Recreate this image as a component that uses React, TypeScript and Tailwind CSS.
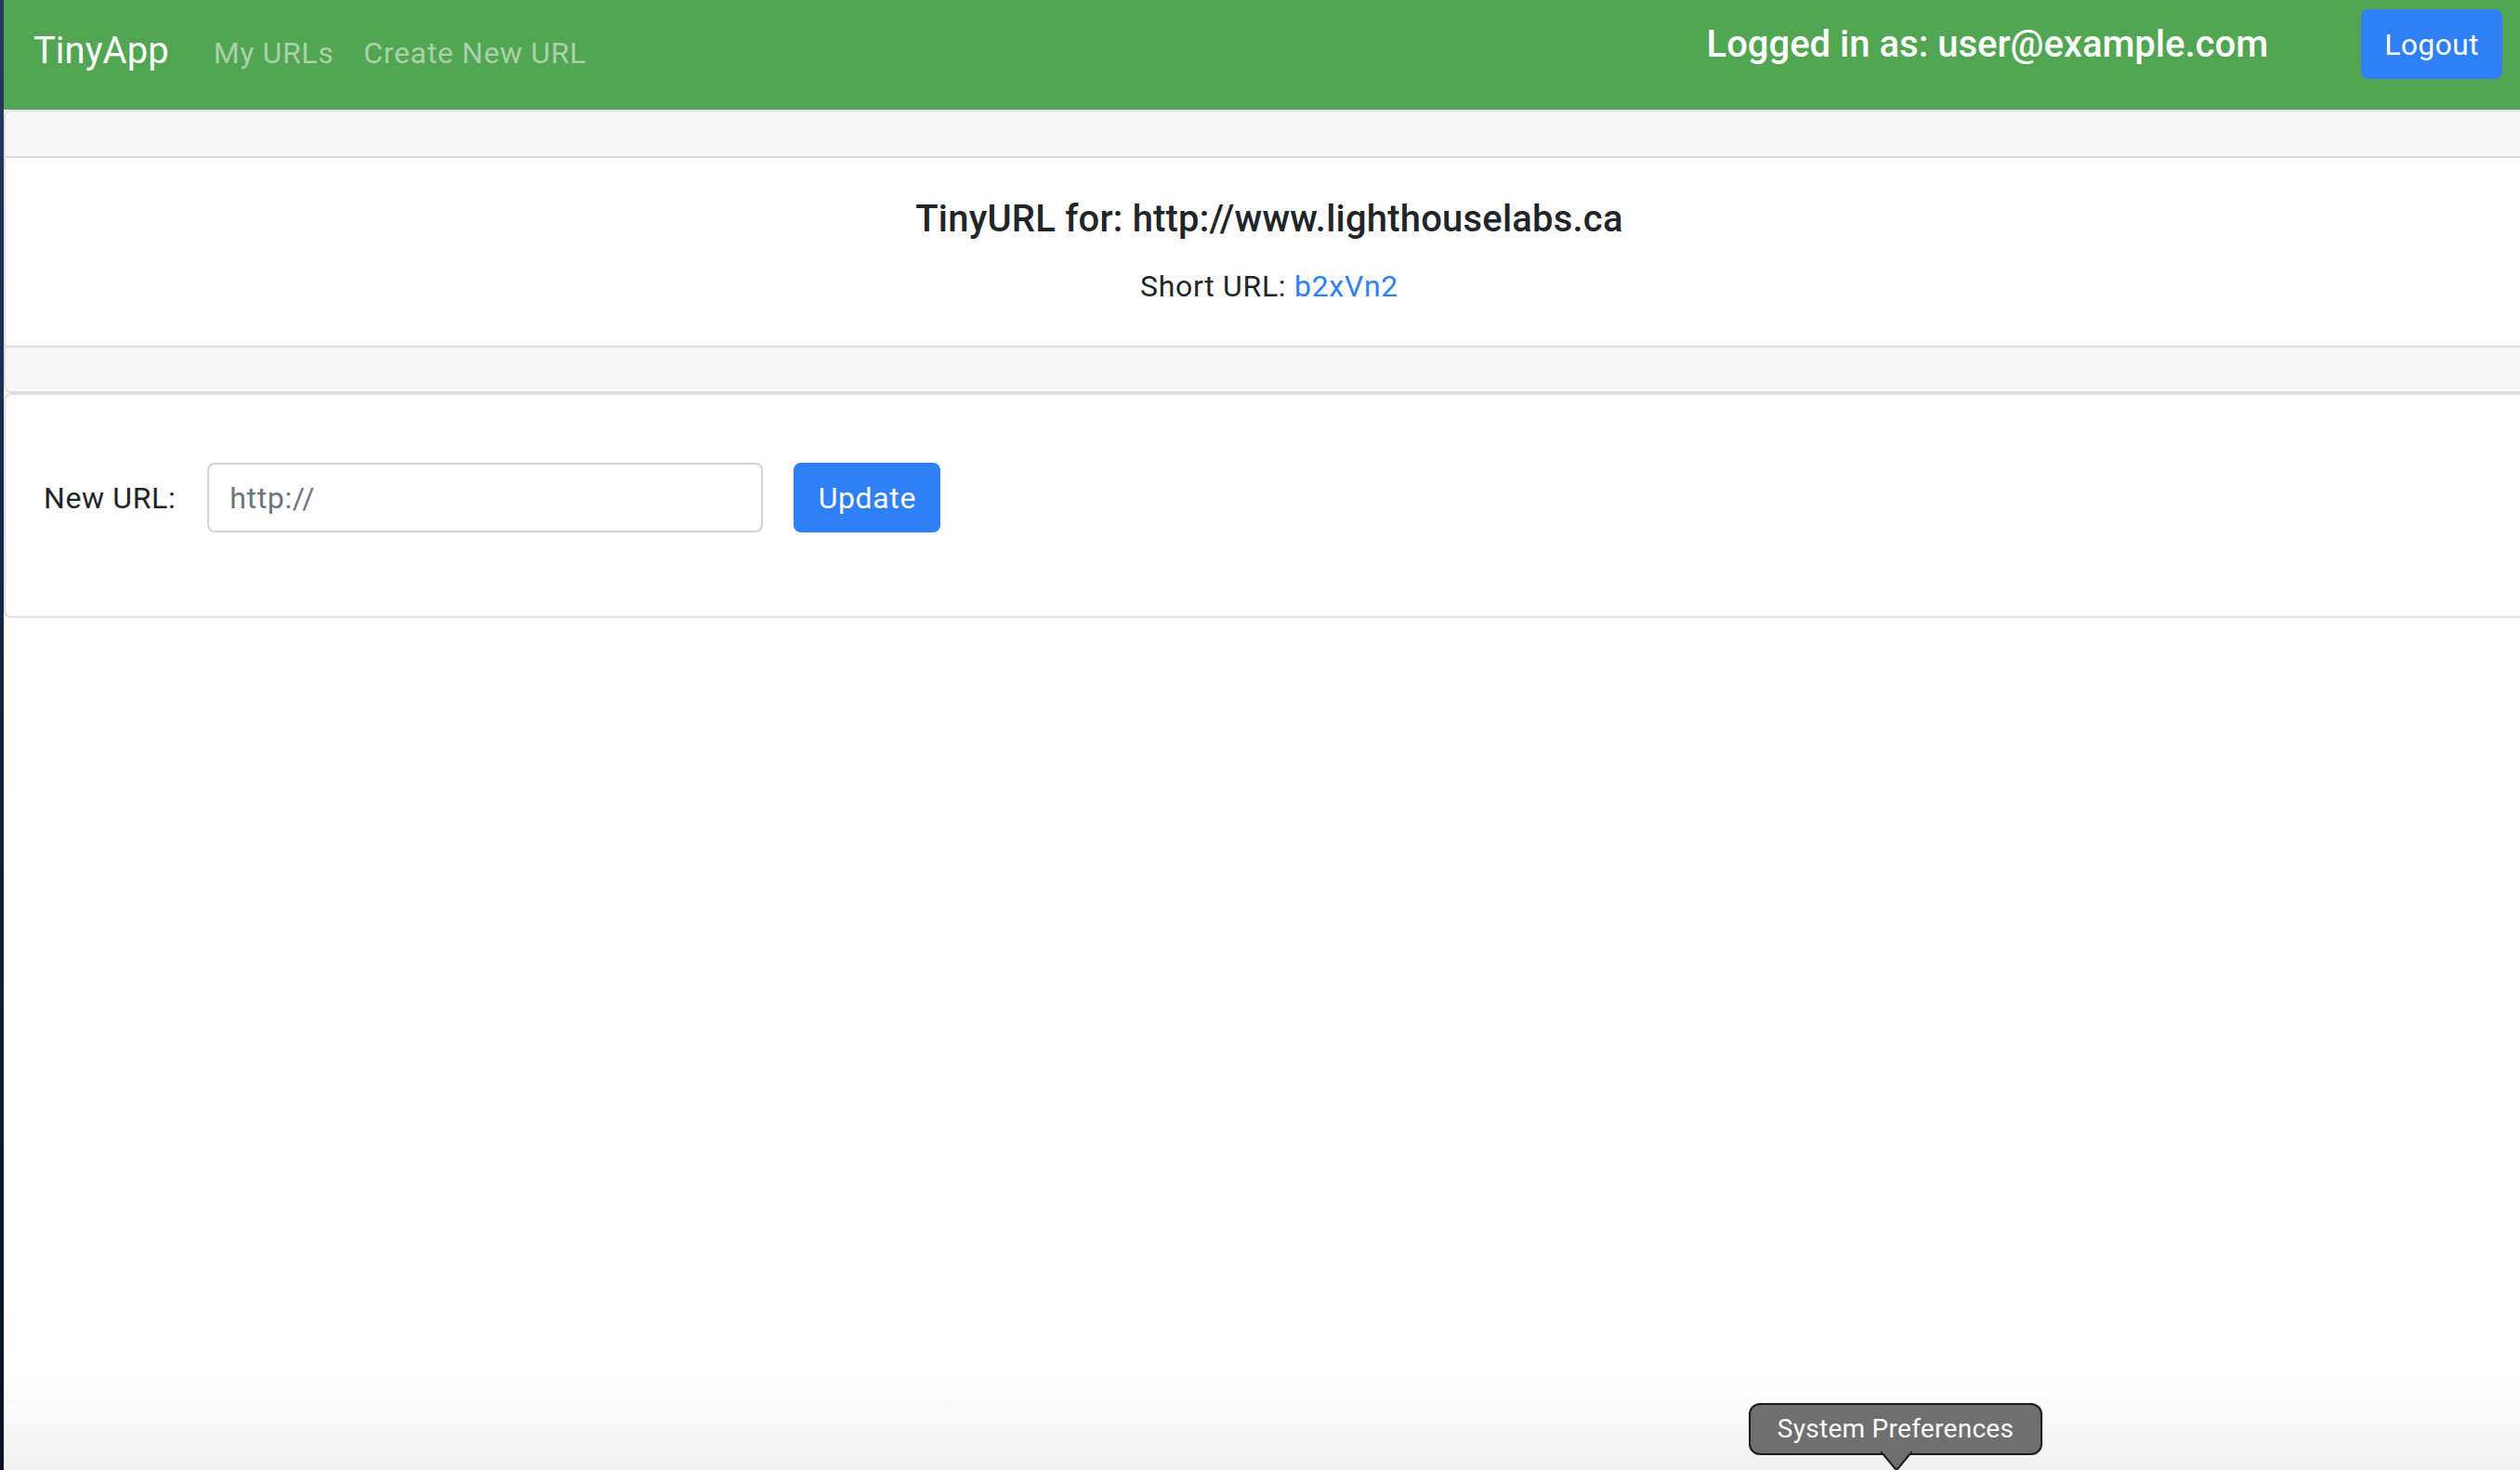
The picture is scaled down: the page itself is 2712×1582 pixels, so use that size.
import React from "react";

const font = { fontFamily: "Roboto, 'Liberation Sans', Arial, sans-serif" };

export default function App() {
  return (
    <div className="relative flex h-[1582px] w-[2712px] overflow-hidden bg-white text-[#212529]" style={font}>
      <div className="w-[4px] shrink-0 bg-gradient-to-b from-[#2a3a5c] via-[#142040] to-[#0b1224]" />
      <div className="flex min-w-0 flex-1 flex-col">
        <nav className="flex h-[118px] shrink-0 items-start bg-[#52a553] pl-[32px] pr-[19px]">
          <a className="mt-[25px] text-[40px] leading-[60px] text-white">TinyApp</a>
          <div className="ml-[32px] mt-[33px] flex">
            <a className="px-[16px] text-[32px] leading-[48px] tracking-[0.02em] text-[#a9d2a9]">My URLs</a>
            <a className="px-[16px] text-[32px] leading-[48px] tracking-[0.02em] text-[#a9d2a9]">Create New URL</a>
          </div>
          <div className="ml-auto mt-[24px] text-[40px] font-medium leading-[48px] text-white">
            Logged in as: user@example.com
          </div>
          <button className="ml-[100px] mt-[10px] h-[75px] w-[152px] rounded-[8px] bg-[#2f7ff6] text-[32px] tracking-[0.01em] text-white">
            Logout
          </button>
        </nav>

        <div className="rounded-tl-[8px] rounded-bl-[8px] border-y-2 border-l-2 border-[#dedede]">
          <div className="h-[50px] rounded-tl-[6px] border-b-2 border-[#dcdcdc] bg-[#f7f7f7]" />
          <div className="flex flex-col items-center pb-[40px] pl-[14px] pt-[42px]">
            <h5 className="text-[40px] font-medium leading-[48px] tracking-[0.005em]">TinyURL for: http://www.lighthouselabs.ca</h5>
            <p className="mt-[24px] text-[32px] leading-[48px] tracking-[0.022em]">
              Short URL: <a className="text-[#2f7ff6]">b2xVn2</a>
            </p>
          </div>
          <div className="h-[49px] rounded-bl-[6px] border-t-2 border-[#dcdcdc] bg-[#f7f7f7]" />
        </div>

        <div className="rounded-tl-[8px] rounded-bl-[8px] border-y-2 border-l-2 border-[#dedede]">
          <div className="flex items-center pb-[90px] pl-[41px] pt-[73px]">
            <label className="text-[32px] leading-[48px] tracking-[0.02em]">New URL:</label>
            <div className="ml-[34px] flex h-[75px] w-[598px] items-center rounded-[8px] border-2 border-[#ced4da] px-[22px] text-[32px] tracking-[0.02em] text-[#6c757d]">
              http://
            </div>
            <button className="ml-[33px] h-[75px] w-[158px] rounded-[8px] bg-[#2f7ff6] text-[32px] tracking-[0.02em] text-white">
              Update
            </button>
          </div>
        </div>
        <div className="flex-1" />
      </div>

      <div className="pointer-events-none absolute bottom-0 left-[4px] right-0 h-[100px] bg-gradient-to-b from-white to-[#f1f1f1]" />

      <div className="absolute left-[1882px] top-[1510px] flex h-[56px] w-[316px] items-center justify-center rounded-[12px] border-2 border-[#1a1a1a] bg-[#6f6f6f] text-[28px] tracking-[0.01em] text-white">
        System Preferences
      </div>
      <svg className="absolute left-[2024px] top-[1562px]" width="34" height="20" viewBox="0 0 34 20">
        <path d="M1 1 L15 18 Q17 20 19 18 L33 1 Z" fill="#6f6f6f" stroke="#1a1a1a" strokeWidth="2" />
        <rect x="2" y="0" width="30" height="2" fill="#6f6f6f" />
      </svg>
    </div>
  );
}
